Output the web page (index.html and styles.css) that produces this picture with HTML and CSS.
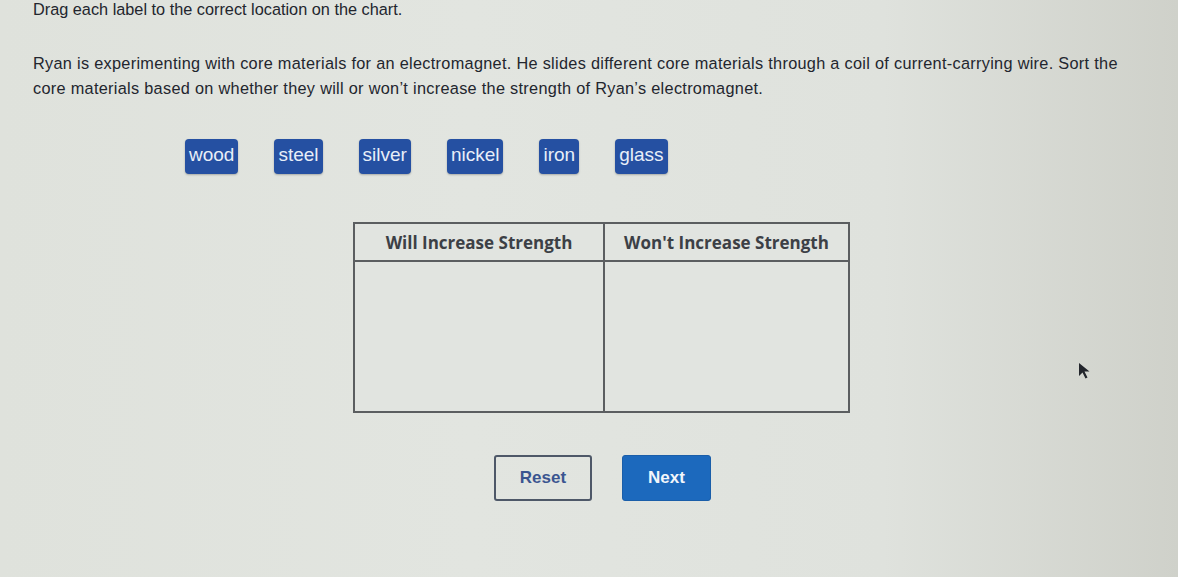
FILE: index.html
```html
<!DOCTYPE html>
<html lang="en">
<head>
  <meta charset="utf-8">
  <title>Electromagnet Cores</title>
  <link rel="stylesheet" href="styles.css">
</head>
<body>
  <div class="page">
    <p class="direction">Drag each label to the correct location on the chart.</p>

    <p class="prompt">Ryan is experimenting with core materials for an electromagnet. He slides different core materials through a coil of current-carrying wire. Sort the core materials based on whether they will or won’t increase the strength of Ryan’s electromagnet.</p>

    <!-- draggable labels -->
    <div class="bank">
      <span class="tile">wood</span>
      <span class="tile">steel</span>
      <span class="tile">silver</span>
      <span class="tile">nickel</span>
      <span class="tile">iron</span>
      <span class="tile">glass</span>
    </div>

    <!-- drop chart -->
    <div class="chart-wrap">
      <table class="chart">
        <thead>
          <tr><th>Will Increase Strength</th><th>Won't Increase Strength</th></tr>
        </thead>
        <tbody>
          <tr><td></td><td></td></tr>
        </tbody>
      </table>
    </div>

    <div class="actions">
      <button class="btn btn-reset">Reset</button>
      <button class="btn btn-next">Next</button>
    </div>
  </div>

  <svg class="pointer" width="14" height="18" viewBox="0 0 14 18">
    <path d="M1 1 L1 14 L4.5 10.5 L7.5 16.5 L9.5 15.5 L6.5 9.5 L11.5 9.5 Z" fill="#23262c"/>
  </svg>
</body>
</html>
```

FILE: styles.css
```css
/* --- Page --- */
*{box-sizing:border-box}
html,body{height:100%}
body{margin:0;overflow:hidden;font-family:"Liberation Sans",Arial,sans-serif;color:#23262e;
  background:linear-gradient(90deg,#dfe2dc 0%,#e2e5e0 40%,#dfe2dd 75%,#cfd1ca 100%)}
.page{position:relative;padding:0 0 0 33px}

/* --- Texts --- */
.direction{margin:0;font-size:16.3px;line-height:18px}
.prompt{margin:33px 0 0;width:1100px;font-size:16.3px;line-height:25px;letter-spacing:.3px}

/* --- Label bank --- */
.bank{display:flex;gap:36px;margin:38px 0 0 152px;height:35px}
.tile{display:inline-flex;align-items:center;padding:0 4px 3px;height:35px;background:#2550a2;color:#e8eef8;
  font-size:19px;border-radius:4px;box-shadow:0 1px 2px rgba(0,0,0,.25)}

/* --- Chart --- */
.chart-wrap{margin:48px 0 0 320px}
.chart{border-collapse:collapse;width:497px;background:#e1e4e0}
.chart th,.chart td{border:2px solid #5b5e60}
.chart th{height:38px;font-family:"Open Sans","DejaVu Sans",sans-serif;font-weight:700;font-size:17px;color:#3c4046;padding:0}
.chart th:first-child{width:250px}
.chart td{height:151px}

/* --- Buttons --- */
.actions{display:flex;gap:30px;margin:42px 0 0 461px}
.btn{height:46px;font-family:"Liberation Sans",Arial,sans-serif;font-weight:700;font-size:17px;border-radius:3px;cursor:pointer}
.btn-reset{width:98px;background:transparent;border:2px solid #4e5868;color:#3b5590}
.btn-next{width:89px;background:#1c69bd;border:1px solid #1a5ea9;color:#f2f6fb}

/* mouse pointer resting over the page */
.pointer{position:absolute;left:1078px;top:362px}
```
